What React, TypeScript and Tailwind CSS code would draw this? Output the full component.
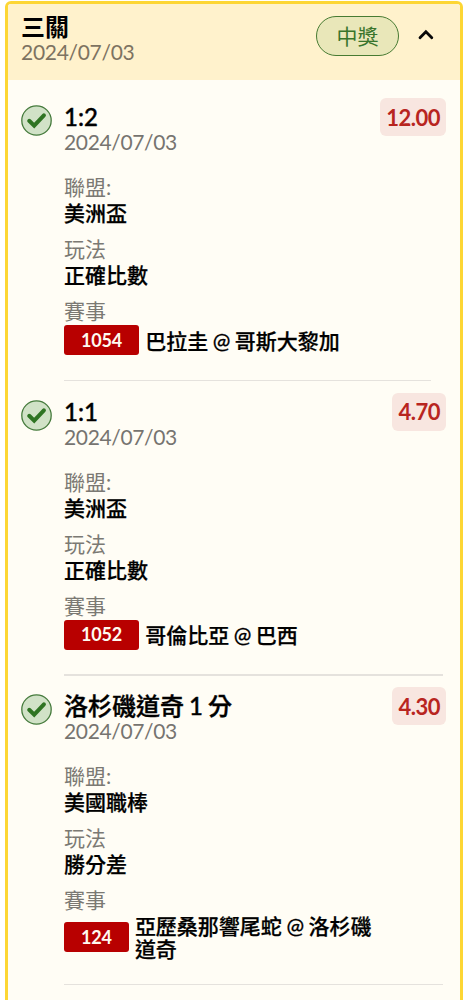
type Leg = {
  title: string;
  date: string;
  odds: string;
  league: string;
  play: string;
  code: string;
  match: string;
  body: string;
  divider: string;
};

const legs: Leg[] = [
  { title: '1:2', date: '2024/07/03', odds: '12.00', league: '美洲盃', play: '正確比數', code: '1054', match: '巴拉圭 @ 哥斯大黎加', body: 'h-[281.5px]', divider: 'w-[367px]' },
  { title: '1:1', date: '2024/07/03', odds: '4.70', league: '美洲盃', play: '正確比數', code: '1052', match: '哥倫比亞 @ 巴西', body: 'h-[281.5px]', divider: 'w-[379px]' },
  { title: '洛杉磯道奇 1 分', date: '2024/07/03', odds: '4.30', league: '美國職棒', play: '勝分差', code: '124', match: '亞歷桑那響尾蛇 @ 洛杉磯道奇', body: 'h-[296.5px]', divider: 'w-[379px]' },
];

function CheckBadge() {
  return (
    <svg className="mt-[7px] h-[31px] w-[31px] shrink-0" viewBox="0 0 31 31" fill="none">
      <circle cx="15.5" cy="15.5" r="14.7" fill="#d1e2c7" stroke="#467b3d" strokeWidth="1.3" />
      <path d="M8.2 15.8l5 4.9 9.7-10.4" stroke="#2f7423" strokeWidth="4" strokeLinecap="round" strokeLinejoin="miter" />
    </svg>
  );
}

function Field({ label, value }: { label: string; value: string }) {
  return (
    <div className="h-[62px] text-[21px]">
      <div className="h-[26px] leading-[26px] text-[#7b7973]">{label}</div>
      <div className="h-[26px] font-medium leading-[26px] [-webkit-text-stroke:0.25px]">{value}</div>
    </div>
  );
}

function LegRow({ leg }: { leg: Leg }) {
  return (
    <section>
      <div className={`flex items-start pl-[13px] pr-[14px] ${leg.body}`}>
        <CheckBadge />
        <div className="ml-3 min-w-0 flex-1">
          <div className="flex items-start justify-between">
            <div className="pt-[5px]">
              <h2 className="h-[26px] whitespace-nowrap text-2xl font-medium leading-[28px] [-webkit-text-stroke:0.4px] [word-spacing:-1px]">{leg.title}</h2>
              <div className="h-[26px] text-[21px] leading-[26px] tracking-[-0.35px] text-[#767470]">{leg.date}</div>
            </div>
            <span className="flex h-[38px] items-center rounded-md bg-[#f8e6e0] px-[6px] text-[22px] font-bold tracking-[-0.5px] text-[#b8251f]">{leg.odds}</span>
          </div>
          <div className="mt-[19px]">
            <Field label="聯盟:" value={leg.league} />
            <Field label="玩法" value={leg.play} />
            <div className="h-[27px] text-[21px] leading-[26px] text-[#7b7973]">賽事</div>
            <div className="flex items-center gap-[6px]">
              <span className="flex h-[30px] shrink-0 items-center rounded-[3px] bg-[#b80000] px-[17px] text-[18px] font-bold tracking-[-0.15px] text-[#fffaf0]">{leg.code}</span>
              <span className="max-w-[244px] text-[21px] font-medium leading-[23px] [-webkit-text-stroke:0.25px] [word-spacing:-0.8px]">{leg.match}</span>
            </div>
          </div>
        </div>
      </div>
      <div className={`ml-14 h-[1.5px] bg-[#e5e2dd] ${leg.divider}`} />
    </section>
  );
}

export default function App() {
  return (
    <main className="h-[1000px] overflow-hidden bg-white pl-[5px] pt-px font-['Lato','Noto_Sans_CJK_TC',sans-serif] text-black">
      <article className="h-[1020px] w-[458px] overflow-hidden rounded-[6px] border-[3px] border-[#fdd634] bg-[#fffdf5]">
        <header className="flex h-[76px] items-start justify-between bg-[#fff2cc] pl-[13px] pr-[25px]">
          <div className="pt-[9px]">
            <h1 className="h-[26px] text-2xl font-bold leading-[28px]">三關</h1>
            <div className="h-[26px] text-[21px] leading-[26px] tracking-[-0.3px] text-[#7d7361]">2024/07/03</div>
          </div>
          <div className="flex items-start">
            <span className="mt-[12px] flex h-[40px] w-[83px] items-center justify-center rounded-full border-[1.5px] border-[#477b32] bg-[#e9e7b9] text-[21px] text-[#39752c]">中獎</span>
            <svg className="ml-[18px] mt-[23px] h-[16px] w-[18px]" viewBox="0 0 18 16" fill="none">
              <path d="M3 10.7l5.9-6 5.9 6" stroke="#080808" strokeWidth="2.8" strokeLinecap="round" strokeLinejoin="miter" />
            </svg>
          </div>
        </header>
        <div className="flex flex-col gap-[11.5px] pt-[18px]">
          {legs.map((leg) => (
            <LegRow key={leg.code} leg={leg} />
          ))}
        </div>
      </article>
    </main>
  );
}
